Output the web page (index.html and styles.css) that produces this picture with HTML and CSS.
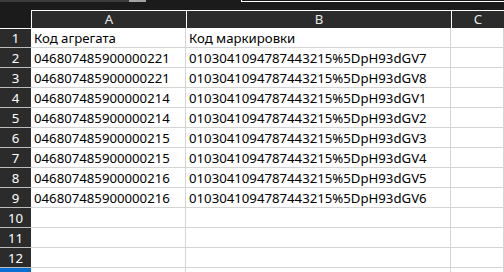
FILE: index.html
```html
<!DOCTYPE html>
<html lang="ru">
  <head>
    <meta charset="UTF-8" />
    <meta name="viewport" content="width=device-width, initial-scale=1.0" />
    <title>Коды маркировки</title>
    <link rel="stylesheet" href="styles.css">
  </head>
  <body>
    <div class="toolbar">
      <div class="name-box"></div>
      <div class="name-box-arrow"></div>
      <div class="formula-bar"></div>
    </div>

    <div class="sheet" id="sheet">
      <div class="corner"></div>
      <div class="col-head">A</div>
      <div class="col-head">B</div>
      <div class="col-head">C</div>
    </div>

    <script>
      // Sheet contents: aggregate code and marking code per row
      const rows = [
        ["Код агрегата", "Код маркировки"],
        ["046807485900000221", "0103041094787443215%5DpH93dGV7"],
        ["046807485900000221", "0103041094787443215%5DpH93dGV8"],
        ["046807485900000214", "0103041094787443215%5DpH93dGV1"],
        ["046807485900000214", "0103041094787443215%5DpH93dGV2"],
        ["046807485900000215", "0103041094787443215%5DpH93dGV3"],
        ["046807485900000215", "0103041094787443215%5DpH93dGV4"],
        ["046807485900000216", "0103041094787443215%5DpH93dGV5"],
        ["046807485900000216", "0103041094787443215%5DpH93dGV6"],
      ];

      // 12 numbered rows plus the edge of the selected 13th one
      const sheet = document.getElementById("sheet");
      let html = "";
      for (let i = 1; i <= 13; i++) {
        const data = rows[i - 1] || ["", ""];
        const headClass = i === 13 ? "row-head selected" : "row-head";
        html += `
          <div class="${headClass}">${i === 13 ? "" : i}</div>
          <div class="cell">${data[0]}</div>
          <div class="cell">${data[1]}</div>
          <div class="cell"></div>
        `;
      }
      sheet.insertAdjacentHTML("beforeend", html);
    </script>
  </body>
</html>
```

FILE: styles.css
```css
html,
body {
  height: 100%;
  overflow: hidden;
}

body {
  margin: 0;
  padding: 0;
  background-color: #1b1b1b;
  font-family: "Noto Sans", "Open Sans", sans-serif;
  font-size: 13.2px;
}

/* Strip left over from the ribbon: name box and formula bar */
.toolbar {
  display: flex;
  height: 10px;
  background-color: #1b1b1b;
}

.name-box {
  width: 129px;
  height: 2px;
  background-color: #3c3c3c;
}

.name-box-arrow {
  width: 17px;
  height: 2px;
  background-color: #a3a3a3;
}

.formula-bar {
  flex: 1;
  margin-left: 95px;
  height: 2px;
  box-sizing: border-box;
  border-left: 1px solid #ffffff;
  border-bottom: 1px solid #ffffff;
}

/* Grid */
.sheet {
  display: grid;
  grid-template-columns: 31px 155px 265px 1fr;
  grid-template-rows: 18px;
  grid-auto-rows: 20px;
  background-color: #ffffff;
}

.corner {
  background-color: #1b1b1b;
  border-bottom: 1px solid #ffffff;
  margin-bottom: -1px;
  position: relative;
  z-index: 1;
}

.col-head {
  background-color: #2b2b2b;
  color: #e6e6e6;
  border-top: 1px solid #ffffff;
  border-left: 1px solid #ffffff;
  box-sizing: border-box;
  display: flex;
  align-items: center;
  justify-content: center;
  line-height: 1;
}

.row-head {
  background-color: #2b2b2b;
  color: #ffffff;
  border-bottom: 1px solid #bdbdbd;
  box-sizing: border-box;
  display: flex;
  align-items: center;
  justify-content: center;
}

.row-head.selected {
  background-color: #0b6fd1;
  border-bottom: none;
}

.cell {
  border-right: 1px solid #d4d4d4;
  border-bottom: 1px solid #d4d4d4;
  box-sizing: border-box;
  padding-left: 3px;
  color: #000000;
  white-space: nowrap;
  overflow: hidden;
  display: flex;
  align-items: center;
}
```
